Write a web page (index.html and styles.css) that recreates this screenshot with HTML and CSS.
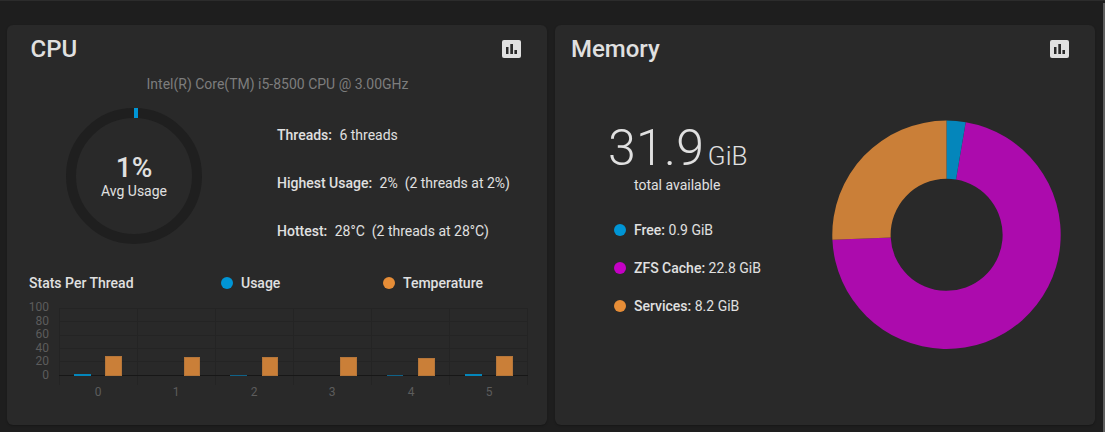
FILE: index.html
```html
<!DOCTYPE html>
<html lang="en">
<head>
<meta charset="utf-8">
<title>Dashboard</title>
<link rel="stylesheet" href="styles.css">
</head>
<body>
<main class="board">
  <section class="card cpu">
    <header class="card-head">
      <h2>CPU</h2>
      <svg class="report-icon" viewBox="0 0 19 18"><rect width="19" height="18" rx="2" fill="#e0e0e0"/><path d="M4 7h2.500v7H4zM8.300 4H11v10H8.300zM12.400 10H15v4h-2.600z" fill="#292929"/></svg>
    </header>
    <p class="model">Intel(R) Core(TM) i5-8500 CPU @ 3.00GHz</p>
    <div class="cpu-main">
      <div class="gauge">
        <svg viewBox="0 0 136 136" width="136" height="136">
          <circle cx="68" cy="68" r="63" fill="none" stroke="#1f1f1f" stroke-width="10"/>
          <rect x="68" y="0" width="4" height="10" fill="#0095d5"/>
        </svg>
        <div class="gauge-label"><strong>1%</strong><span>Avg Usage</span></div>
      </div>
      <ul class="facts">
        <li><b>Threads:</b> 6 threads</li>
        <li><b>Highest Usage:</b> 2% &nbsp;(2 threads at 2%)</li>
        <li><b>Hottest:</b> 28°C &nbsp;(2 threads at 28°C)</li>
      </ul>
    </div>
    <div class="legend">
      <span class="legend-title">Stats Per Thread</span>
      <span class="legend-item usage"><i class="dot blue"></i>Usage</span>
      <span class="legend-item temp"><i class="dot orange"></i>Temperature</span>
    </div>
    <svg class="bars" viewBox="0 0 540 100" width="540" height="100">
      <g class="grid">
        <path d="M52 8.500H521M52 21.500H521M52 35.500H521M52 48.500H521M52 61.500H521"/>
        <path d="M52.500 8V85M130.500 8V85M208.500 8V85M286.500 8V85M364.500 8V85M442.500 8V85M520.500 8V85"/>
      </g>
      <path class="axis" d="M52 75.500H521"/>
      <g class="ytext">
        <text x="42" y="11">100</text><text x="42" y="24.500">80</text><text x="42" y="38">60</text><text x="42" y="51.500">40</text><text x="42" y="65">20</text><text x="42" y="79">0</text>
      </g>
      <g class="xtext">
        <text x="91" y="96">0</text><text x="169" y="96">1</text><text x="247" y="96">2</text><text x="325" y="96">3</text><text x="404" y="96">4</text><text x="482" y="96">5</text>
      </g>
      <g class="bar-u">
        <rect x="67" y="74" width="17" height="2"/>
        <rect class="dim" x="223" y="75" width="17" height="1"/>
        <rect class="dim" x="380" y="75" width="16" height="1"/>
        <rect x="458" y="74" width="17" height="2"/>
      </g>
      <g class="bar-t">
        <rect x="98.500" y="56.500" width="16" height="19"/>
        <rect x="177.500" y="57.500" width="15" height="18"/>
        <rect x="255.500" y="57.500" width="15" height="18"/>
        <rect x="333.500" y="57.500" width="16" height="18"/>
        <rect x="411.500" y="58.500" width="16" height="17"/>
        <rect x="489.500" y="56.500" width="16" height="19"/>
      </g>
    </svg>
  </section>
  <section class="card memory">
    <header class="card-head">
      <h2>Memory</h2>
      <svg class="report-icon" viewBox="0 0 19 18"><rect width="19" height="18" rx="2" fill="#e0e0e0"/><path d="M4 7h2.500v7H4zM8.300 4H11v10H8.300zM12.400 10H15v4h-2.600z" fill="#292929"/></svg>
    </header>
    <div class="mem-main">
      <div class="mem-text">
        <div class="total"><span class="num">31.9</span> <span class="unit">GiB</span></div>
        <div class="total-sub">total available</div>
        <ul class="mem-legend">
          <li><i class="dot blue"></i><b>Free:</b> 0.9 GiB</li>
          <li><i class="dot purple"></i><b>ZFS Cache:</b> 22.8 GiB</li>
          <li><i class="dot orange"></i><b>Services:</b> 8.2 GiB</li>
        </ul>
      </div>
      <svg class="donut" viewBox="-0.500 0.200 230 230" width="230" height="230">
        <path fill="#ac0bad" d="M134.200 2.400A114.200 114.200 0 1 1 0.900 120L59.200 117.700A56 56 0 1 0 124.500 59.800Z"/>
        <path fill="#0486bb" d="M115 0.800A114.200 114.200 0 0 1 134.200 2.400L124.500 59.800A56 56 0 0 0 115 59Z"/>
        <path fill="#ca7f38" d="M115 0.800A114.200 114.200 0 0 0 0.900 120L59.200 117.700A56 56 0 0 1 115 59Z"/>
      </svg>
    </div>
  </section>
</main>
<div class="edge"></div>
</body>
</html>
```
FILE: styles.css
```css
* { box-sizing: border-box; }
html, body { margin: 0; height: 100%; }
body {
  background: #1e1e1e;
  color: #e0e0e0;
  font-family: Roboto, "Liberation Sans", sans-serif;
  font-size: 14px;
  overflow: hidden;
  border-top: 1px solid #2c2c2c;
}
.edge {
  position: absolute;
  top: 3px;
  right: 0;
  bottom: 0;
  width: 2px;
  background: #5e5e5e;
}
.board {
  display: flex;
  gap: 8px;
  padding: 24px 0 0 7px;
}
.card {
  width: 540px;
  height: 400px;
  background: #292929;
  border-radius: 6px;
  box-shadow: 0 1px 2px rgba(0,0,0,.25);
}
.card-head {
  display: flex;
  justify-content: space-between;
  align-items: center;
  height: 48px;
  padding: 0 26px 0 23.500px;
}
.memory .card-head { padding-left: 16px; }
.card-head h2 { margin: 0; font-size: 24px; font-weight: 500; line-height: 48px; }
.report-icon { width: 19px; height: 18px; margin-top: -1px; }
.model { margin: 1px 0 0 1px; height: 20px; text-align: center; color: #7d7d7d; font-size: 14px; line-height: 20px; }
.cpu-main { display: flex; margin-top: 14px; padding-left: 59px; }
.gauge { position: relative; width: 136px; height: 136px; }
.gauge-label {
  position: absolute;
  inset: 0;
  padding-top: 1px;
  display: flex;
  flex-direction: column;
  align-items: center;
  justify-content: center;
}
.gauge-label strong { font-size: 28px; font-weight: 500; line-height: 28px; }
.gauge-label span { margin-top: 1px; font-size: 14px; line-height: 16px; }
.facts { list-style: none; margin: 0; padding: 17px 0 0 75px; }
.facts li { height: 48px; line-height: 20px; white-space: pre-wrap; font-size: 14px; }
.facts b { font-weight: 500; margin-right: 4px; }
.legend { height: 20px; margin: 4px 0 0 22px; display: flex; align-items: center; font-weight: 500; }
.legend-title { width: 192px; }
.legend-item { display: flex; align-items: center; }
.usage { width: 162px; }
.dot { display: inline-block; width: 12px; height: 12px; border-radius: 50%; margin-right: 8px; flex: none; }
.blue { background: #0095d5; }
.orange { background: #e68d37; }
.purple { background: #c400c4; }
.bars { display: block; margin-top: 7px; overflow: visible; }
.grid path { fill: none; stroke: #242424; stroke-width: 1; }
.axis { stroke: #171717; stroke-width: 1; fill: none; }
.ytext text { text-anchor: end; fill: #5c5c5c; font-size: 12px; }
.xtext text { text-anchor: middle; fill: #5c5c5c; font-size: 12px; }
.bar-u rect { fill: #0486bb; }
.bar-u rect.dim { fill: #0f6288; }
.bar-t rect { fill: #ca7f38; stroke: #b5763a; stroke-width: 1; }
.mem-main { display: flex; height: 352px; }
.mem-text { width: 276px; padding: 51px 0 0 53px; }
.total { height: 48px; line-height: 48px; white-space: nowrap; }
.num { font-size: 50px; font-weight: 300; letter-spacing: .3px; }
.unit { font-size: 26px; font-weight: 300; }
.total-sub { margin: 5px 0 0 26px; line-height: 16px; font-size: 14px; }
.mem-legend { list-style: none; margin: 18px 0 0 6px; padding: 0; }
.mem-legend li { display: flex; align-items: center; height: 38px; white-space: pre; }
.mem-legend b { font-weight: 500; }
.donut { flex: none; margin-top: 47px; }
```
